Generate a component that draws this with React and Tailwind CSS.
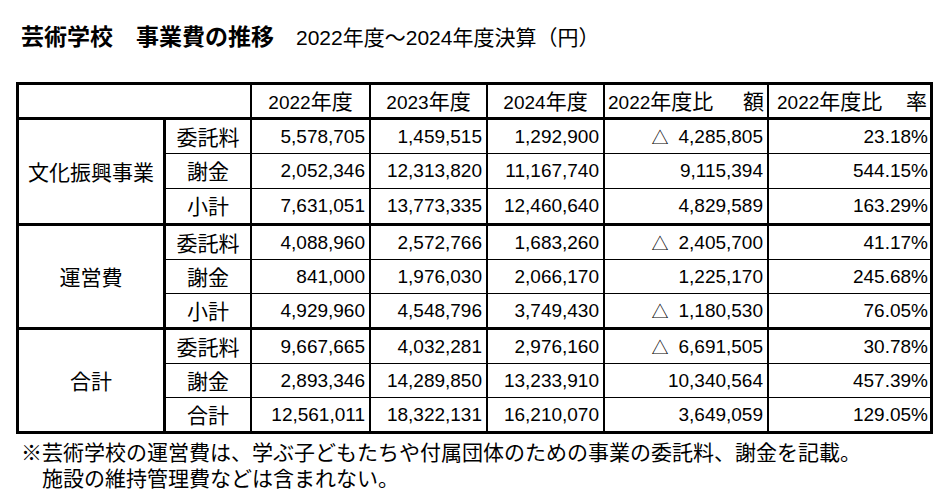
const JP = "font-['Noto_Sans_CJK_JP',sans-serif]";

const groups = [
  {
    label: "文化振興事業",
    rows: [
      ["委託料", "5,578,705", "1,459,515", "1,292,900", "-4,285,805", "23.18%"],
      ["謝金", "2,052,346", "12,313,820", "11,167,740", "9,115,394", "544.15%"],
      ["小計", "7,631,051", "13,773,335", "12,460,640", "4,829,589", "163.29%"],
    ],
  },
  {
    label: "運営費",
    rows: [
      ["委託料", "4,088,960", "2,572,766", "1,683,260", "-2,405,700", "41.17%"],
      ["謝金", "841,000", "1,976,030", "2,066,170", "1,225,170", "245.68%"],
      ["小計", "4,929,960", "4,548,796", "3,749,430", "-1,180,530", "76.05%"],
    ],
  },
  {
    label: "合計",
    rows: [
      ["委託料", "9,667,665", "4,032,281", "2,976,160", "-6,691,505", "30.78%"],
      ["謝金", "2,893,346", "14,289,850", "13,233,910", "10,340,564", "457.39%"],
      ["合計", "12,561,011", "18,322,131", "16,210,070", "3,649,059", "129.05%"],
    ],
  },
];

function Amount({ value }) {
  if (value.startsWith("-")) {
    return (
      <span className="flex items-center">
        <span className={`${JP} mr-[10px] text-[17px] leading-none`}>△</span>
        <span>{value.slice(1)}</span>
      </span>
    );
  }
  return <span>{value}</span>;
}

function Year({ y, tail = "" }) {
  return (
    <span>
      {y}
      <span className={`${JP} text-[21px]`}>年度{tail}</span>
    </span>
  );
}

export default function App() {
  return (
    <div className="w-[952px] h-[504px] overflow-hidden bg-white text-black">
      <div className="flex items-baseline pl-[21px] pt-[21px]">
        <span className={`${JP} text-[23px] font-bold leading-[28px]`}>芸術学校　事業費の推移</span>
        <span className="ml-[22px] text-[21px] font-['Liberation_Sans','Noto_Sans_CJK_JP',sans-serif]">
          2022年度～2024年度決算（円）
        </span>
      </div>

      <div className="ml-[16px] mt-[28px] w-fit border-[3px] border-black font-['Liberation_Sans','Noto_Sans_CJK_JP',sans-serif] text-[19px] leading-none">
        <div className="grid grid-cols-[147px_86px_119px_117px_117px_164px_161px] grid-rows-[35px_34px_35px_37px_34px_34px_36px_34px_34px_33px]">
          <div className="col-span-2 border-r-2 border-b-[3px] border-black" />
          <div className="flex items-center justify-center border-r-2 border-b-[3px] border-black">
            <Year y="2022" />
          </div>
          <div className="flex items-center justify-center border-r-2 border-b-[3px] border-black">
            <Year y="2023" />
          </div>
          <div className="flex items-center justify-center border-r-2 border-b-[3px] border-black">
            <Year y="2024" />
          </div>
          <div className="flex items-center justify-between border-r-2 border-b-[3px] border-black pl-[3px] pr-[3px]">
            <Year y="2022" tail="比" />
            <span className={`${JP} text-[21px]`}>額</span>
          </div>
          <div className="flex items-center justify-between border-b-[3px] border-black pl-[8px] pr-[3px]">
            <Year y="2022" tail="比" />
            <span className={`${JP} text-[21px]`}>率</span>
          </div>

          {groups.map((g, gi) => {
            const lastGroup = gi === groups.length - 1;
            return [
              <div
                key={g.label + "-label"}
                className={`${JP} row-span-3 flex items-center justify-center border-r-[3px] border-black text-[21px] ${
                  lastGroup ? "" : "border-b-[3px]"
                }`}
              >
                {g.label}
              </div>,
              ...g.rows.map((r, ri) => {
                const lastRow = ri === g.rows.length - 1;
                const b = lastRow ? (lastGroup ? "" : "border-b-[3px]") : "border-b";
                const cells = [];
                cells.push(
                  <div
                    key={gi + "-" + ri + "-k"}
                    className={`${JP} flex items-center justify-center border-r-2 border-black text-[21px] ${b}`}
                  >
                    {r[0]}
                  </div>
                );
                for (let c = 1; c <= 4; c++) {
                  cells.push(
                    <div
                      key={gi + "-" + ri + "-" + c}
                      className={`flex items-center justify-end border-r-2 border-black pr-[4px] ${b}`}
                    >
                      <Amount value={r[c]} />
                    </div>
                  );
                }
                cells.push(
                  <div
                    key={gi + "-" + ri + "-p"}
                    className={`flex items-center justify-end border-black pr-[2px] ${b}`}
                  >
                    {r[5]}
                  </div>
                );
                return cells;
              }),
            ];
          })}
        </div>
      </div>

      <div className={`${JP} mt-[4px] text-[21px] leading-[26px]`}>
        <div className="pl-[21px]">
          ※芸術学校の運営費は、学ぶ子どもたちや付属団体のための事業の委託料、謝金を記載。
        </div>
        <div className="pl-[42px]">施設の維持管理費などは含まれない。</div>
      </div>
    </div>
  );
}
